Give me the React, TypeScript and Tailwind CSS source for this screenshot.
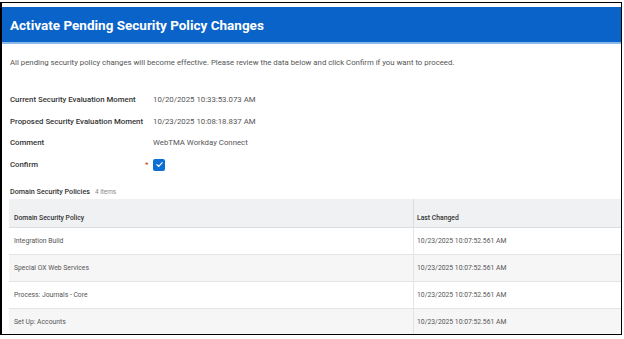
const FIELDS = [
  { label: "Current Security Evaluation Moment", value: "10/20/2025 10:33:53.073 AM" },
  { label: "Proposed Security Evaluation Moment", value: "10/23/2025 10:08:18.837 AM" },
  { label: "Comment", value: "WebTMA Workday Connect" },
];

const POLICIES = [
  { name: "Integration Build", changed: "10/23/2025 10:07:52.561 AM" },
  { name: "Special OX Web Services", changed: "10/23/2025 10:07:52.561 AM" },
  { name: "Process: Journals - Core", changed: "10/23/2025 10:07:52.561 AM" },
  { name: "Set Up: Accounts", changed: "10/23/2025 10:07:52.561 AM" },
];

export default function App() {
  return (
    <div
      className="w-[624px] h-[339px] bg-white pt-[2px] overflow-hidden"
      style={{ fontFamily: "Roboto, 'Liberation Sans', sans-serif" }}
    >
      <div className="w-[622px] h-[333px] border border-black border-l-2 pt-[4px] overflow-hidden">
        <div className="h-[37px] bg-[#0a63c8] border-b-2 border-[#8ab8e8] flex items-center pl-[8px] pt-[2px]">
          <h1 className="text-white font-bold text-[13.5px] leading-none">
            Activate Pending Security Policy Changes
          </h1>
        </div>

        <div className="pl-[8px]">
          <p className="mt-[13px] text-[7.8px] leading-[12px] text-[#555]">
            All pending security policy changes will become effective. Please review the data below and click Confirm if you want to proceed.
          </p>

          <div className="mt-[20px]">
            {FIELDS.map(f => (
              <div key={f.label} className="h-[21.7px] flex items-center">
                <span className="w-[143px] text-[7.8px] font-medium text-[#333]">{f.label}</span>
                <span className="text-[7.8px] text-[#555]">{f.value}</span>
              </div>
            ))}
            <div className="h-[21.7px] flex items-center">
              <span className="w-[135px] text-[7.8px] font-medium text-[#333]">Confirm</span>
              <span className="w-[8px] text-[8px] text-[#c0392b] leading-none">*</span>
              <span className="w-[12px] h-[12px] rounded-[2px] bg-[#0b6fd6] flex items-center justify-center">
                <svg viewBox="0 0 12 12" className="w-[9px] h-[9px]">
                  <path d="M2.5 6.2 L5 8.6 L9.6 3.6" fill="none" stroke="white" strokeWidth="1.6" strokeLinecap="round" strokeLinejoin="round" />
                </svg>
              </span>
            </div>
          </div>

          <div className="mt-[11px] h-[12px] flex items-center gap-[5px]">
            <span className="text-[7.2px] font-medium text-[#333]">Domain Security Policies</span>
            <span className="text-[6.4px] text-[#888]">4 items</span>
          </div>

          <div className="-ml-[1px]">
            <div className="h-[29px] flex bg-[#f0f1f3] border-b border-[#dcdde0]">
              <div className="w-[405px] border-r border-[#dcdde0] flex items-end pb-[4px] pl-[5px] text-[6.8px] font-medium text-[#333]">
                Domain Security Policy
              </div>
              <div className="flex-1 flex items-end pb-[4px] pl-[3px] text-[6.8px] font-medium text-[#333]">
                Last Changed
              </div>
            </div>
            {POLICIES.map((p, i) => (
              <div
                key={p.name}
                className={`h-[27px] flex border-b border-[#e3e4e6] ${i % 2 === 0 ? "bg-white" : "bg-[#f6f6f7]"}`}
              >
                <div className="w-[405px] border-r border-[#e3e4e6] flex items-center pl-[5px] text-[6.8px] text-[#555]">
                  {p.name}
                </div>
                <div className="flex-1 flex items-center pl-[3px] text-[6.8px] text-[#555]">
                  {p.changed}
                </div>
              </div>
            ))}
          </div>
        </div>
      </div>
    </div>
  );
}
